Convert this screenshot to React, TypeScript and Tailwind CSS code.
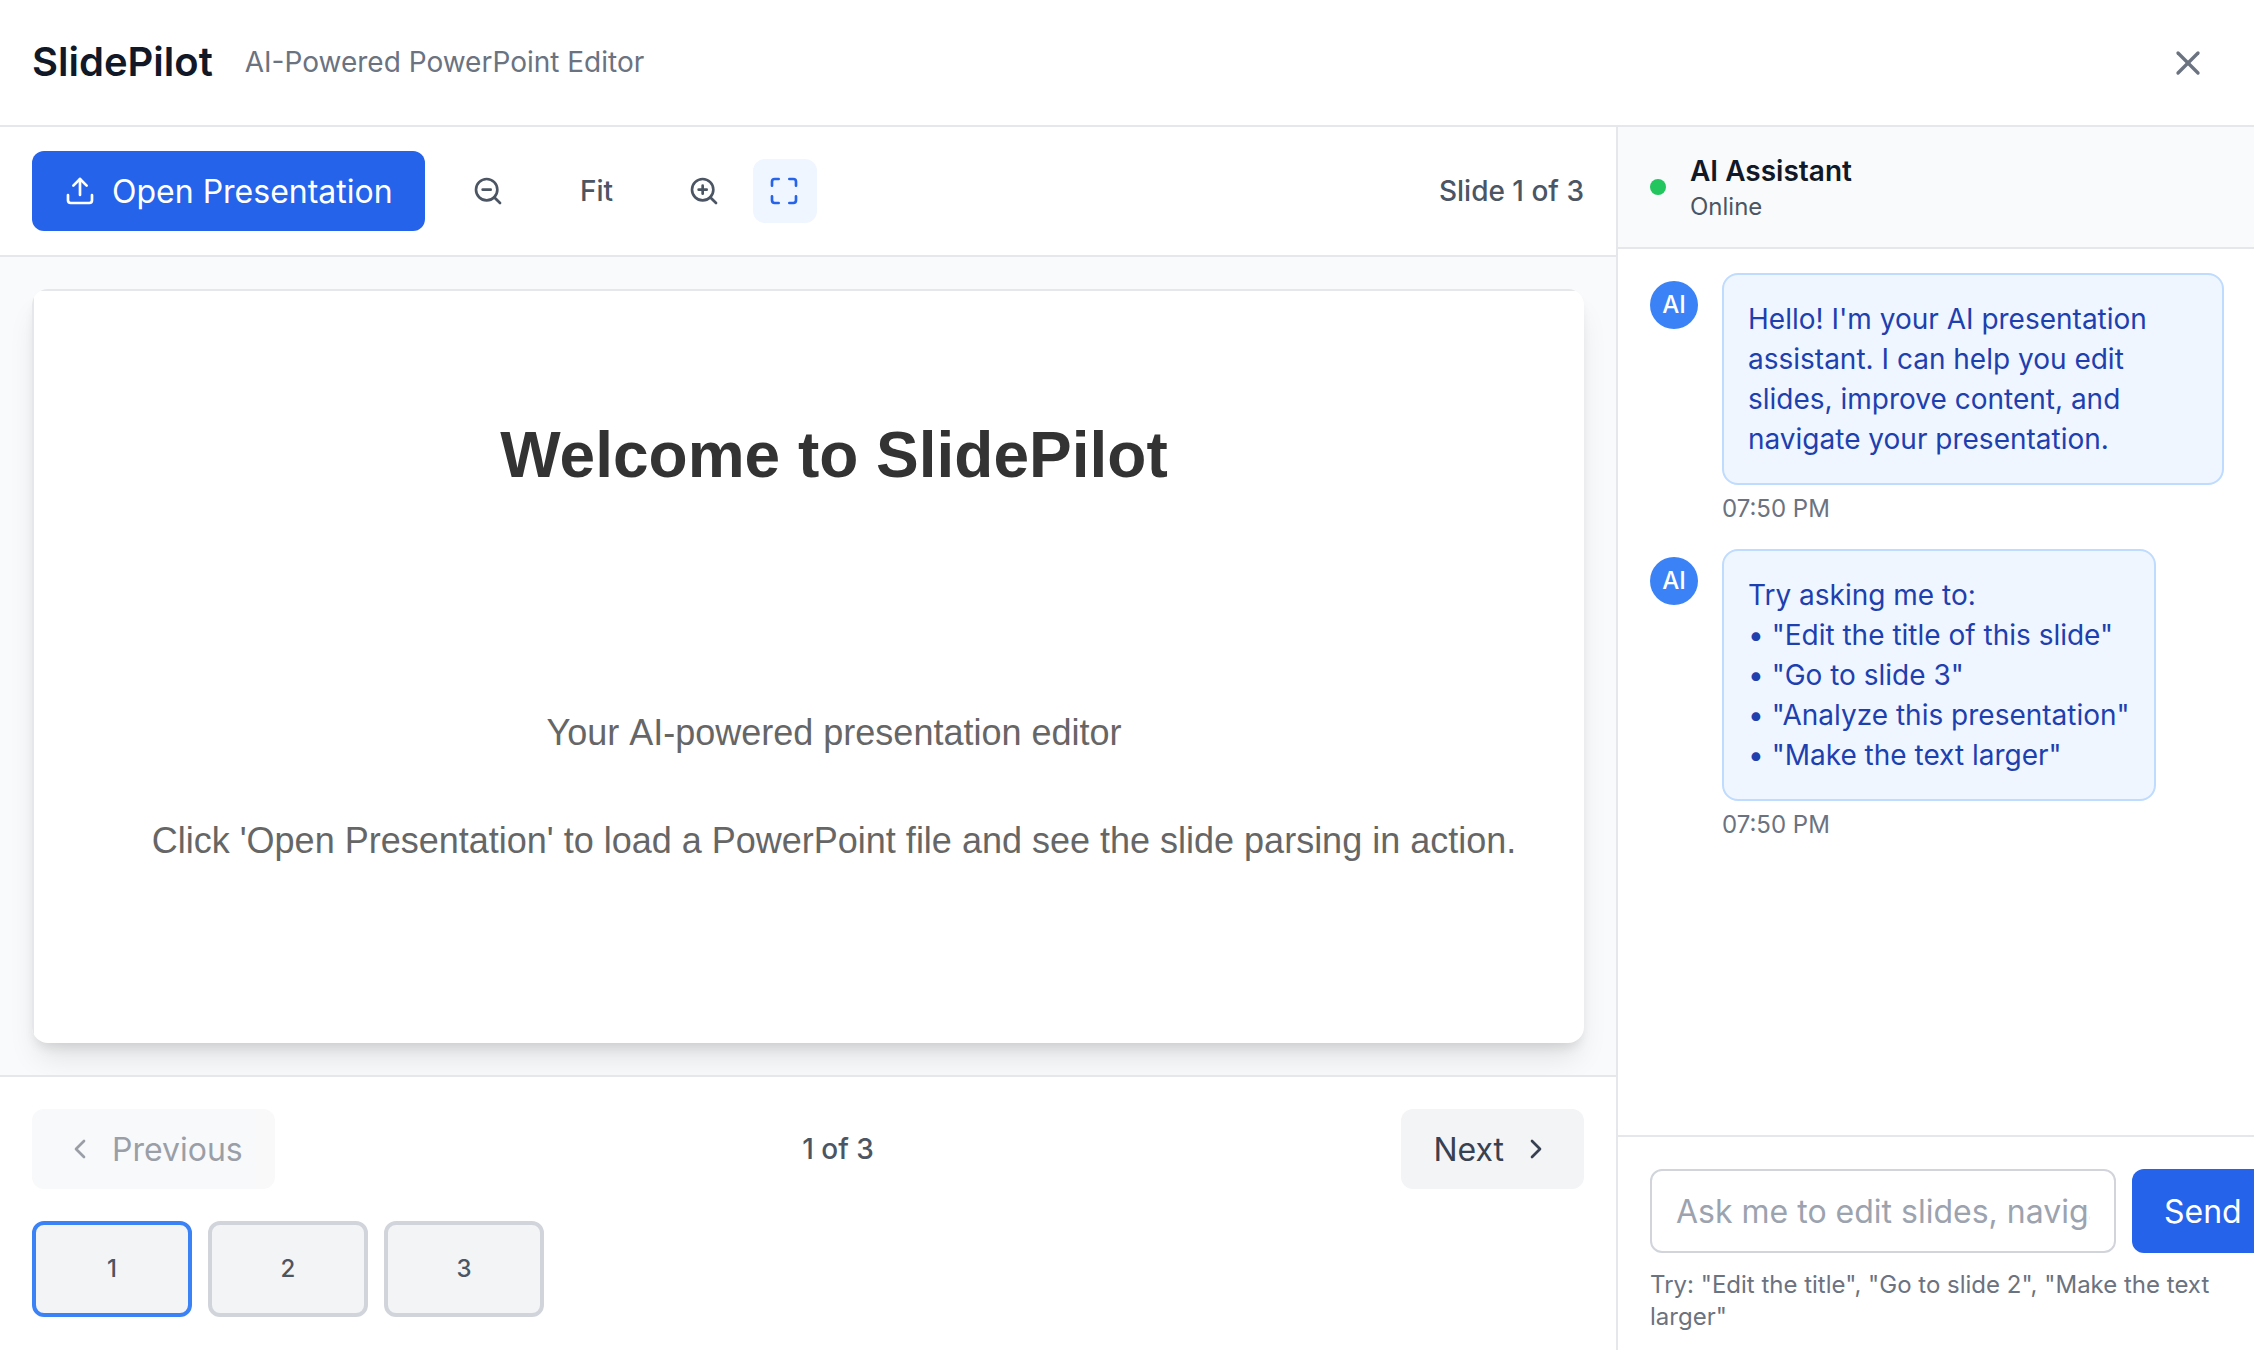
import React from "react";
import { Upload, ZoomIn, ZoomOut, Maximize, ChevronLeft, ChevronRight, X } from "lucide-react";

const tips = [
  "Try asking me to:",
  '• "Edit the title of this slide"',
  '• "Go to slide 3"',
  '• "Analyze this presentation"',
  '• "Make the text larger"',
];

function Message({ children }: { children: React.ReactNode }) {
  return (
    <div className="flex items-start gap-6">
      <div className="mt-2 flex size-12 shrink-0 items-center justify-center rounded-full bg-[#3b82f6] text-2xl font-medium text-white">AI</div>
      <div className="min-w-0">
        <div className="w-fit max-w-[502px] rounded-2xl border-2 border-[#bfdbfe] bg-[#eff6ff] p-6 text-[28px] leading-10 text-[#1e40af]">{children}</div>
        <div className="mt-2 text-2xl leading-8 text-[#6b7280]">07:50 PM</div>
      </div>
    </div>
  );
}

export default function App() {
  return (
    <div className="flex h-[1350px] w-[2254px] flex-col overflow-hidden bg-white font-['Inter',sans-serif] text-[#111827]">
      <header className="flex h-[127px] shrink-0 items-center border-b-2 border-[#e5e7eb] px-8">
        <h1 className="pb-px text-[40px] leading-[56px] font-semibold">SlidePilot</h1>
        <span className="ml-8 pb-px text-[28px] leading-10 text-[#6b7280]">AI-Powered PowerPoint Editor</span>
        <button className="mr-[-2px] ml-auto p-4 text-[#6b7280]"><X size={40} /></button>
      </header>
      <div className="flex min-h-0 flex-1">
        <main className="flex w-[1616px] shrink-0 flex-col">
          <div className="flex h-[130px] shrink-0 items-center border-b-2 border-[#e5e7eb] px-8 text-[#4b5563]">
            <button className="flex h-20 items-center gap-4 rounded-xl bg-[#2563eb] px-8 text-[32px] text-white"><Upload size={32} /><span className="pt-0.5">Open Presentation</span></button>
            <button className="ml-8 flex size-16 items-center justify-center pr-0.5"><ZoomOut size={32} /></button>
            <span className="ml-4 w-[120px] text-center text-[28px] font-medium">Fit</span>
            <button className="ml-4 flex size-16 items-center justify-center pr-0.5"><ZoomIn size={32} /></button>
            <button className="ml-4 flex size-16 items-center justify-center rounded-xl bg-[#eff6ff] pr-0.5 text-[#2563eb]"><Maximize size={32} /></button>
            <span className="ml-auto text-[28px] font-medium">Slide 1 of 3</span>
          </div>
          <section className="min-h-0 flex-1 overflow-hidden bg-[#f9fafb] p-8">
            <div className="h-[754px] overflow-hidden rounded-2xl bg-white shadow-[0_20px_30px_-6px_rgba(0,0,0,0.1),0_8px_12px_-4px_rgba(0,0,0,0.1)]">
              <div className="h-full border-t-2 border-l-2 border-[#e5e7eb] pt-[116px] pl-[50px] text-center font-['Liberation_Sans',Arial,sans-serif]">
                <h2 className="text-[64px] leading-[96px] font-bold text-[#333]">Welcome to SlidePilot</h2>
                <div className="mt-[203px] text-[36px] leading-[54px] whitespace-nowrap text-[#666]">
                  <p><span className="mr-0.5">Your</span> AI-powered presentation editor</p>
                  <p className="mt-[54px]">Click 'Open Presentation' to load a PowerPoint file and see the slide parsing in action.</p>
                </div>
              </div>
            </div>
          </section>
          <footer className="h-[275px] shrink-0 border-t-2 border-[#e5e7eb] px-8 pt-8">
            <div className="flex items-center justify-between">
              <button className="flex h-20 items-center gap-4 rounded-xl bg-[#f3f4f6] px-8 text-[32px] text-[#374151] opacity-50"><ChevronLeft size={32} /><span className="pt-0.5">Previous</span></button>
              <span className="text-[28px] font-medium text-[#4b5563]">1 of 3</span>
              <button className="flex h-20 items-center gap-4 rounded-xl bg-[#f3f4f6] px-8 text-[32px] text-[#374151]"><span className="pt-0.5">Next</span><ChevronRight size={32} /></button>
            </div>
            <div className="mt-8 flex gap-4">
              {[1, 2, 3].map((n) => (
                <button key={n} className={`h-24 w-40 rounded-xl border-4 bg-[#f3f4f6] text-2xl font-medium text-[#4b5563] ${n === 1 ? "border-[#3b82f6]" : "border-[#d1d5db]"}`}>{n}</button>
              ))}
            </div>
          </footer>
        </main>
        <aside className="flex min-w-0 flex-1 flex-col border-l-2 border-[#e5e7eb]">
          <div className="flex h-[122px] shrink-0 items-center gap-6 border-b-2 border-[#e5e7eb] bg-[#f9fafb] px-8">
            <span className="size-4 rounded-full bg-[#22c55e]" />
            <div>
              <h3 className="text-[28px] leading-10 font-semibold">AI Assistant</h3>
              <p className="text-2xl leading-8 text-[#4b5563]">Online</p>
            </div>
          </div>
          <div className="min-h-0 flex-1 space-y-6 py-6 pl-8">
            <Message>Hello! I'm your AI presentation assistant. I can help you edit slides, improve content, and navigate your presentation.</Message>
            <Message>{tips.map((t) => <div key={t}>{t}</div>)}</Message>
          </div>
          <div className="h-[215px] shrink-0 overflow-hidden border-t-2 border-[#e5e7eb] pt-8 pl-8">
            <div className="flex h-[84px] gap-4">
              <input className="w-[466px] shrink-0 rounded-xl border-2 border-[#d1d5db] px-6 pt-0.5 text-[32px] placeholder:text-[#9ca3af]" placeholder="Ask me to edit slides, navigate, or improve content..." />
              <button className="shrink-0 rounded-xl bg-[#2563eb] px-8 pt-0.5 text-[32px] text-white">Send</button>
            </div>
            <p className="mt-4 w-[572px] text-2xl leading-8 text-[#6b7280]">Try: "Edit the title", "Go to slide 2", "Make the text larger"</p>
          </div>
        </aside>
      </div>
    </div>
  );
}
